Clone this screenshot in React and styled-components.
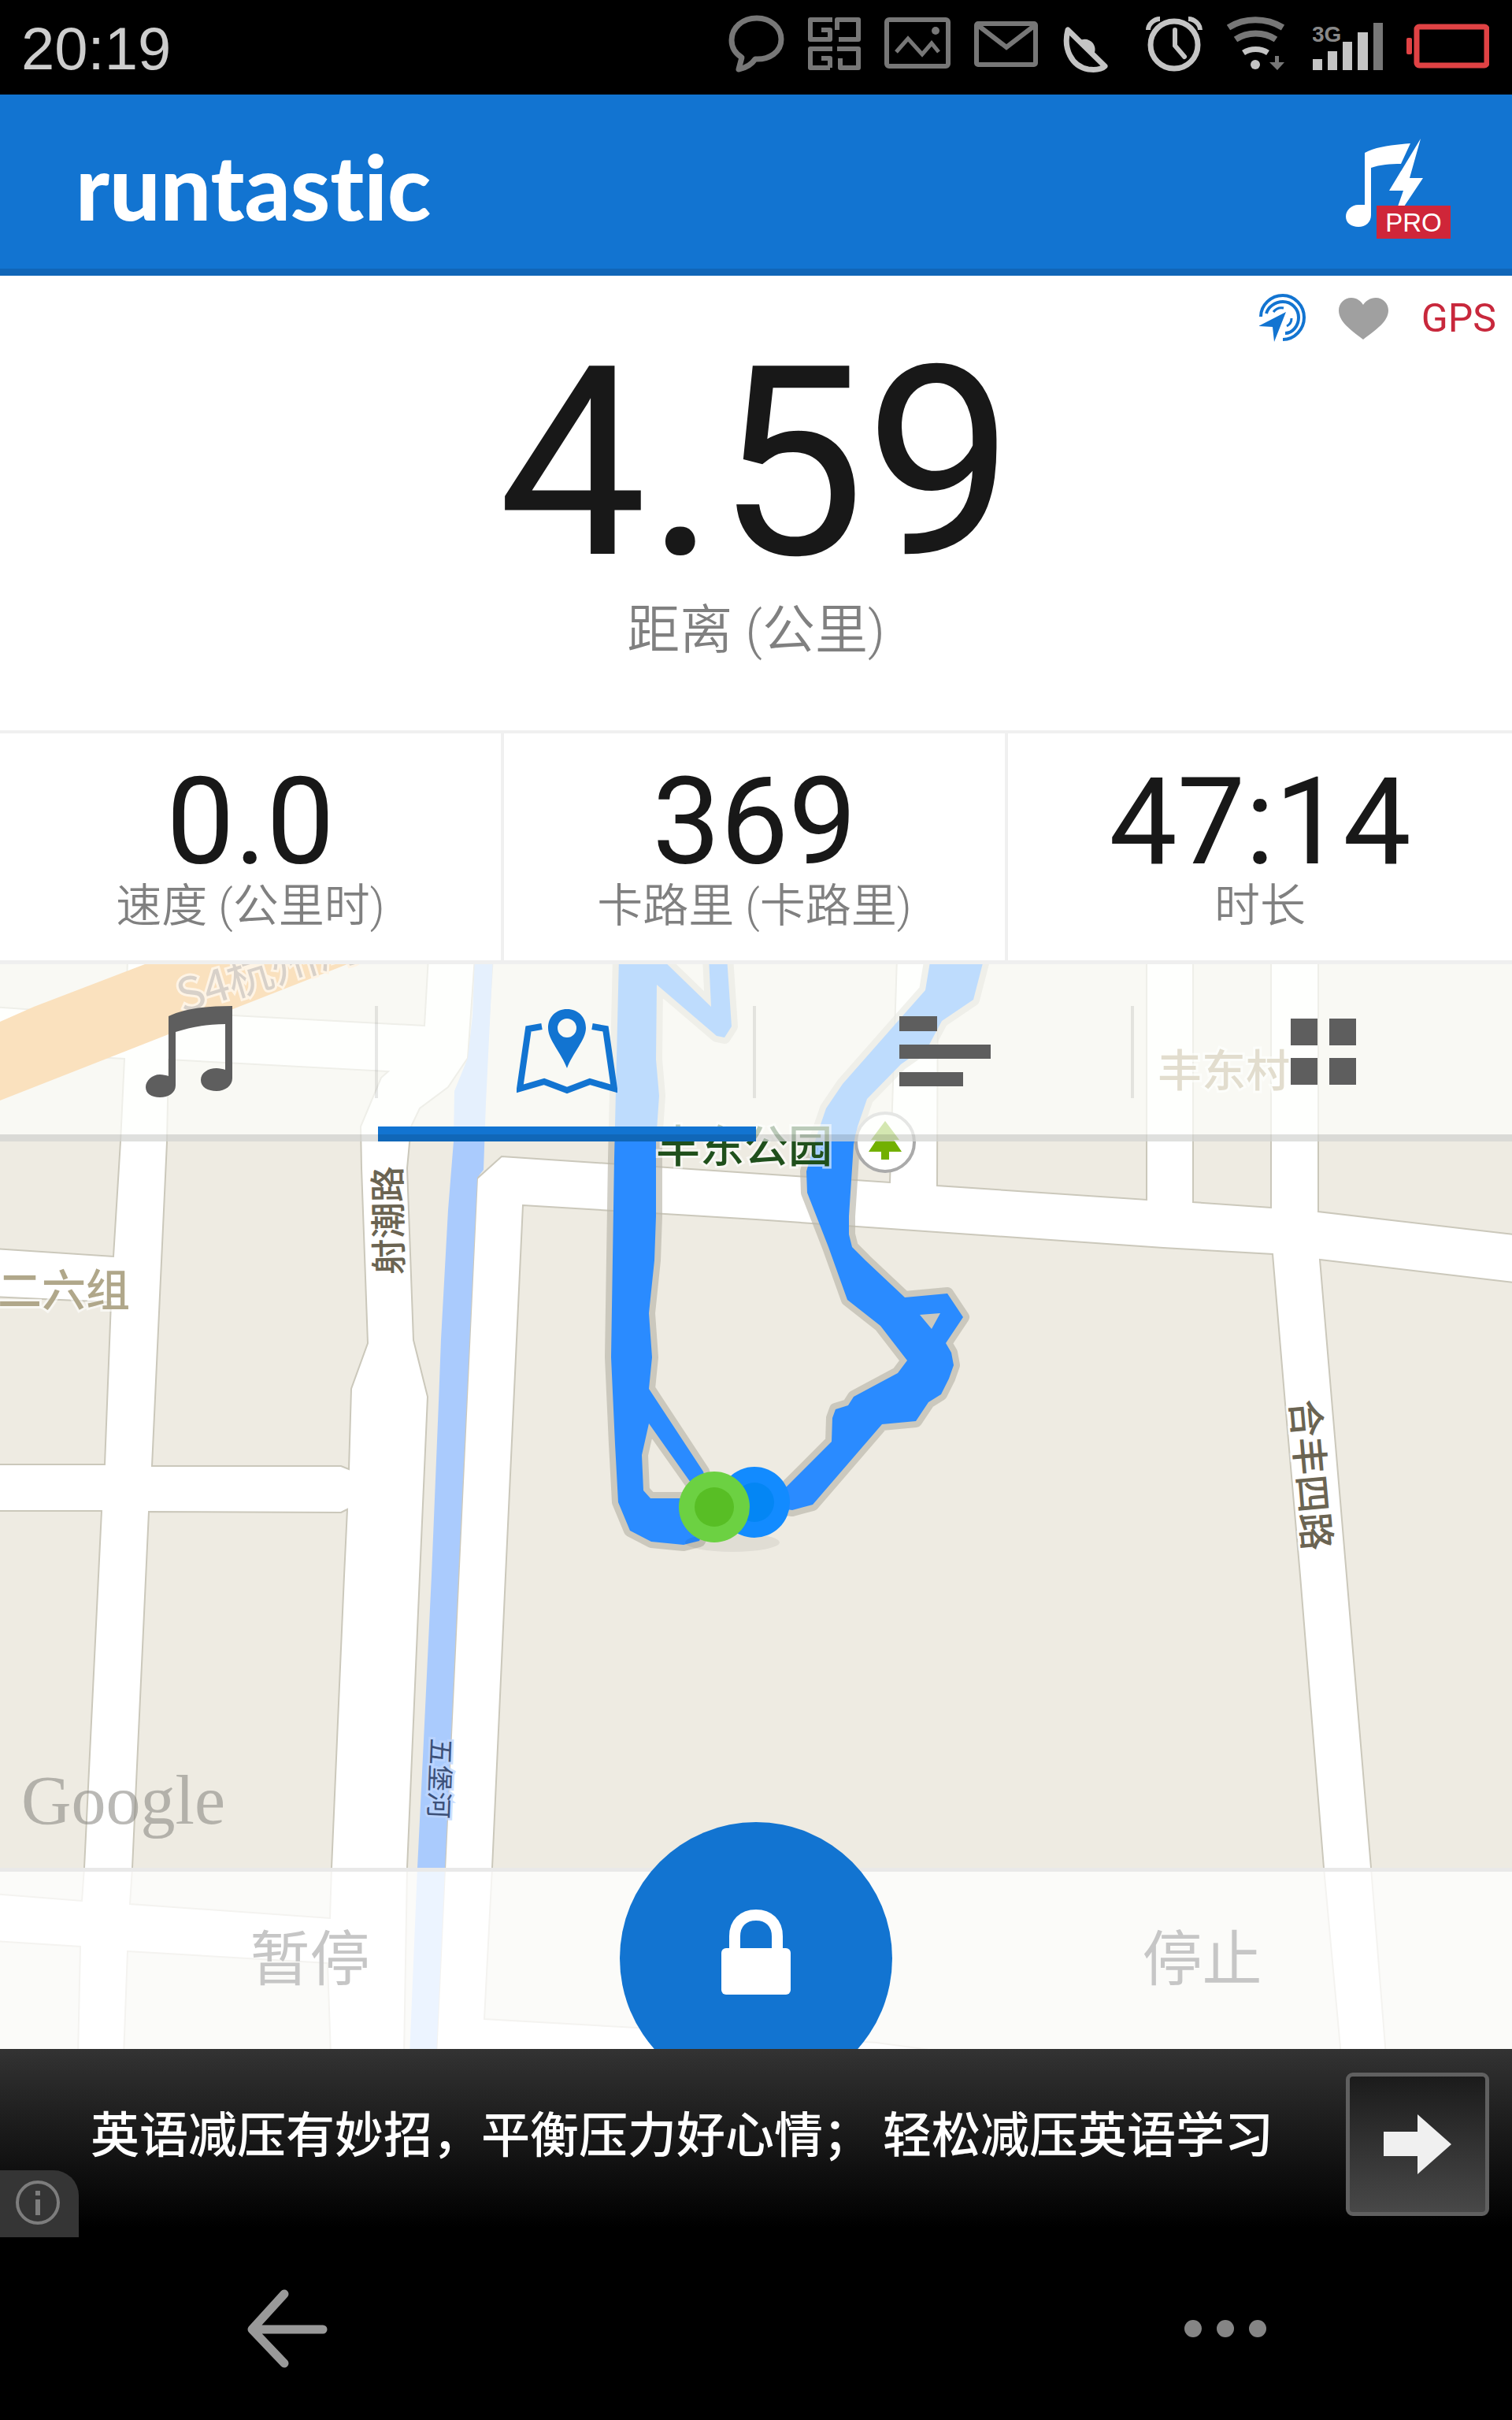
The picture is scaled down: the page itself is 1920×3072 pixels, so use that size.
import React from "react";
import styled, { createGlobalStyle, css } from "styled-components";

const blue = "#1274d1";
const latin = `Roboto, "Noto Sans CJK SC", sans-serif`;
const han = `"Noto Sans CJK SC", sans-serif`;

const GlobalStyle = createGlobalStyle`
  * { box-sizing: border-box; }
  body { margin: 0; background: #000; font-family: ${latin}; }
  button { margin: 0; padding: 0; border: 0; background: none; font: inherit; color: inherit; cursor: pointer; }
  svg { display: block; flex: none; }
`;

const Screen = styled.div`
  display: flex;
  flex-direction: column;
  min-height: 100vh;
  background: #fff;
`;

const StatusBar = styled.div`
  display: flex;
  align-items: flex-start;
  justify-content: space-between;
  height: 120px;
  padding: 16px 29px 0 27px;
  background: #000;
`;

const Clock = styled.time`
  font: 76px/92px "Liberation Sans", sans-serif;
  color: #cdcdcd;
`;

const StatusIcons = styled.div`
  display: flex;
  gap: 30px;
`;

const Header = styled.header`
  display: flex;
  align-items: center;
  justify-content: space-between;
  height: 230px;
  padding: 20px 78px 0 96px;
  border-bottom: 9px solid #1066b8;
  background: ${blue};
`;

const Brand = styled.h1`
  margin: 0;
  padding-bottom: 10px;
  font: 900 114px/128px Lato, sans-serif;
  font-variant-ligatures: none;
  color: #fff;
`;

const Hero = styled.section`
  display: flex;
  flex-direction: column;
  align-items: center;
  padding-bottom: 87px;
  border-bottom: 4px solid #f0f0f0;
`;

const Sensors = styled.div`
  display: flex;
  align-self: stretch;
  align-items: center;
  justify-content: flex-end;
  gap: 42px;
  height: 94px;
  padding: 14px 20px 0 0;
`;

const Gps = styled.span`
  font-size: 50px;
  line-height: 60px;
  color: #c8283c;
`;

const Value = styled.div`
  font-size: ${(p) => (p.$large ? 336 : 154)}px;
  line-height: ${(p) => (p.$large ? 288 : 132)}px;
  color: #181818;
`;

const Label = styled.div`
  margin-top: ${(p) => (p.$large ? 28 : 8)}px;
  font-size: ${(p) => (p.$large ? 67 : 58)}px;
  line-height: ${(p) => (p.$large ? 80 : 64)}px;
  font-weight: 350;
  color: #808080;
`;

const Stats = styled.section`
  display: grid;
  grid-template-columns: repeat(3, 1fr);
  border-bottom: 5px solid #efefef;
`;

const Stat = styled.div`
  display: flex;
  flex-direction: column;
  align-items: center;
  padding: 47px 0 37px;
  &:not(:last-child) { border-right: 4px solid #f0f0f0; }
`;

const Stage = styled.main`
  display: grid;
  flex: 1;
  grid-template-rows: minmax(0, 1fr);
  overflow: hidden;
  min-height: 900px;
`;

const MapLayer = styled.div`
  grid-area: 1 / 1;
  min-height: 0;
  overflow: hidden;
  svg { width: 100%; height: 100%; }
`;

const Tabs = styled.nav`
  grid-area: 1 / 1;
  align-self: start;
  display: grid;
  grid-template-columns: repeat(4, 1fr);
  z-index: 1;
  background: rgba(254, 255, 252, 0.7);
`;

const Tab = styled.button`
  display: flex;
  align-items: center;
  justify-content: center;
  height: 225px;
  padding-bottom: 4px;
  color: ${(p) => (p.$active ? blue : "#5e5e5e")};
  box-shadow: inset 0 -9px rgba(0, 0, 0, 0.12);
  &:not(:last-child) {
    background: linear-gradient(rgba(0, 0, 0, 0.09), rgba(0, 0, 0, 0.09)) right 53px / 4px 117px no-repeat;
  }
  ${(p) => p.$active && css`box-shadow: inset 0 -9px #1067b8, inset 0 -19px ${blue};`}
`;

const Controls = styled.div`
  grid-area: 1 / 1;
  align-self: end;
  display: grid;
  grid-template-columns: 1fr 346px 1fr;
  grid-template-rows: minmax(0, 1fr);
  z-index: 1;
  height: 230px;
  border-top: 5px solid #e9e9e9;
  background: rgba(255, 255, 255, 0.78);
`;

const Action = styled.button`
  padding-bottom: 16px;
  font: 76px/88px ${han};
  color: #c6c6c6;
`;

const LockButton = styled.button`
  display: flex;
  align-items: center;
  justify-content: center;
  width: 346px;
  height: 346px;
  margin-top: -63px;
  padding-bottom: 15px;
  border-radius: 50%;
  background: ${blue};
`;

const Ad = styled.aside`
  position: relative;
  display: flex;
  align-items: flex-start;
  justify-content: space-between;
  height: 239px;
  padding: 30px 29px 0 115px;
  background: linear-gradient(#333, #1c1c1c 40%, #000 95%);
`;

const AdLink = styled.a`
  padding-top: 35px;
  font: 500 62px/80px ${han};
  color: #fff;
  text-decoration: none;
  white-space: nowrap;
`;

const AdButton = styled.button`
  display: flex;
  align-items: center;
  justify-content: center;
  flex: none;
  width: 182px;
  height: 182px;
  border: 5px solid #606060;
  border-radius: 9px;
  background: linear-gradient(#1b1b1b, #484848);
`;

const AdInfo = styled.button`
  position: absolute;
  left: 0;
  bottom: 0;
  display: flex;
  align-items: center;
  justify-content: center;
  width: 100px;
  height: 85px;
  border-radius: 0 32px 0 0;
  background: #353535;
`;

const NavBar = styled.nav`
  display: flex;
  align-items: center;
  justify-content: space-between;
  height: 232px;
  padding: 0 312px 0 314px;
  background: #000;
`;

const gray = { stroke: "#777", strokeWidth: 7, fill: "none" };
const light = { stroke: "#c4c4c4", strokeWidth: 7, fill: "none" };

function StatusGlyphs() {
  return (
    <StatusIcons>
      <svg width="71" height="80" viewBox="925 16 71 80" {...gray} strokeLinejoin="round">
        <path d="M961 23c-18 0-32 12-32 28 0 9 5 17 13 22l-4 15c10-2 17-7 21-13 18 1 33-9 33-25 0-15-13-27-31-27Z" />
      </svg>
      <svg width="67" height="80" viewBox="1025 16 67 80" {...gray} strokeWidth="6" strokeLinejoin="round">
        <path d="M1056 25H1028V50H1053V38H1042M1062 38V25H1089V50H1064M1056 62H1028V86H1053M1053 86V74H1042M1062 62H1089V86H1066V74" />
      </svg>
      <svg width="84" height="80" viewBox="1121 16 84 80" {...gray} strokeWidth="6">
        <rect x="1124" y="25" width="78" height="59" rx="3" />
        <path d="m1136 66 15-17 18 20 12-14 9 11" strokeWidth="5" />
        <circle cx="1186" cy="39" r="5" fill="#777" stroke="none" />
      </svg>
      <svg width="81" height="80" viewBox="1236 16 81 80" {...gray} strokeWidth="6">
        <rect x="1239" y="30" width="75" height="52" rx="2" />
        <path d="m1242 33 35 27 35-27" />
      </svg>
      <svg width="76" height="80" viewBox="1347 16 76 80" {...light} strokeWidth="7" strokeLinejoin="round">
        <path d="M1355 38c-6 23 4 46 26 50 9 1 17 0 21-4Z" />
        <path d="m1370 52c5-4 13-2 17 3 4 6 3 12-1 17Z" fill="#c4c4c4" stroke="none" />
      </svg>
      <svg width="74" height="80" viewBox="1453 16 74 80" {...light}>
        <circle cx="1490" cy="57" r="30" />
        <path d="M1491 38v20l12 14" strokeWidth="6" strokeLinecap="round" />
        <path d="M1457 38c0-7 7-14 15-14M1523 38c0-7-7-14-15-14" strokeWidth="6" />
      </svg>
      <svg width="79" height="80" viewBox="1559 16 79 80" {...light}>
        <path d="M1561 35c20-13 48-13 69 0M1570 50c15-10 36-10 51 0" stroke="#777" strokeWidth="8" />
        <path d="M1580 67c9-6 22-6 31 0" strokeWidth="7" />
        <circle cx="1595" cy="82" r="6" fill="#c4c4c4" stroke="none" />
        <path d="M1620 71h5v8h7l-9 10-10-10h7Z" fill="#777" stroke="none" />
      </svg>
      <svg width="89" height="80" viewBox="1668 16 89 80" fill="#c4c4c4">
        <text x="1667" y="53" fontFamily="Liberation Sans, sans-serif" fontWeight="700" fontSize="28" fill="#888">3G</text>
        <path d="M1668 75h12v14h-12ZM1687 65h12v24h-12ZM1706 53h12v36h-12ZM1725 41h13v48h-13Z" />
        <rect x="1745" y="29" width="12" height="60" fill="#777" />
      </svg>
      <svg width="105" height="80" viewBox="1786 16 105 80">
        <rect x="1799" y="34" width="89" height="49" rx="3" fill="none" stroke="#e04244" strokeWidth="7" />
        <rect x="1786" y="48" width="7" height="21" rx="2" fill="#e04244" />
      </svg>
    </StatusIcons>
  );
}

const BLOCKS = [
  "-9,1215 162,1215 160,1290 -9,1278",
  "222,1215 544,1215 539,1302 222,1285",
  "-9,1335 158,1344 153,1449 144,1595 -9,1585",
  "214,1345 493,1360 484,1368 458,1430 459,1483 467,1705 446,1763 443,1865 433,1861 193,1861 212,1450",
  "-9,1646 141,1653 133,1859 -9,1859",
  "-9,1918 129,1918 107,2371 104,2413 -9,2404",
  "189,1919 433,1920 441,1916 437,2000 421,2371 419,2435 165,2417 168,2371",
  "-9,2464 102,2471 99,2610 -9,2610",
  "162,2477 416,2492 420,2610 157,2610",
  "603,1215 594,1343 569,1380 533,1407 522,1430 517,1483 525,1701 543,1773 533,2000 517,2371 513,2610 554,2610 606,1495 626,1215",
  "626,1215 1139,1215 1130,1501 637,1468 607,1495",
  "664,1530 960,1548 1477,1584 1616,1592 1632,1782 1651,2000 1681,2371 1703,2610 1240,2610 1113,2593 808,2574 615,2563 625,2371 642,2000",
  "1191,1215 1456,1215 1456,1523 1190,1505",
  "1515,1215 1614,1215 1614,1533 1515,1526",
  "1674,1215 1930,1215 1930,1568 1674,1538",
  "1676,1599 1930,1629 1930,2610 1760,2610 1741,2371 1710,2000 1693,1800",
];

const TRACK =
  "M786 1215H838L903 1278 900 1215H923L929 1303 920 1317 910 1315 834 1250 833 1345 837 1391 833 1449 833 1544 831 1600 824 1667 828 1723 824 1763 893 1868 907 1913 888 1956 868 1961 827 1957 800 1943 785 1907 781 1833 776 1723 780 1470Z" +
  "M824 1807 815 1847 817 1892 826 1902H890L877 1882Z" +
  "M1182 1215 1175 1257 1144 1292 1070 1376 1049 1407 1036 1445 1024 1487 1025 1514 1052 1583 1076 1650 1118 1683 1152 1727 1140 1743 1084 1773 1077 1784 1061 1789 1057 1800 1056 1830 999 1887 960 1910 1006 1917 1032 1910 1120 1808 1163 1804 1179 1780 1195 1770 1205 1750 1211 1733 1208 1717 1201 1705 1223 1672 1203 1642 1149 1647 1099 1600 1082 1583 1078 1567 1078 1544 1084 1453 1089 1430 1101 1395 1144 1351 1180 1326 1196 1296 1236 1269 1250 1215Z" +
  "M1168 1669 1194 1667 1183 1687Z";

const MapText = styled.text`
  font-family: ${han};
  font-size: ${(p) => p.$size || 56}px;
  font-weight: ${(p) => p.$weight || 500};
  fill: ${(p) => p.$color};
  stroke: ${(p) => p.$halo || "rgba(255,255,255,0.6)"};
  stroke-width: 6px;
  paint-order: stroke;
`;

const Watermark = styled.text`
  font-family: "Liberation Serif", serif;
  font-size: 88px;
  fill: #8c8b86;
  fill-opacity: 0.6;
`;

function RouteMap() {
  return (
    <MapLayer>
      <svg viewBox="0 1224 1920 1377" preserveAspectRatio="xMidYMid slice" role="img" aria-label="路线地图">
        <rect y="1224" width="1920" height="1377" fill="#fff" />
        <g fill="#eeebe2" stroke="#cbc8bb" strokeWidth="2">
          {BLOCKS.map((b) => <polygon key={b} points={b} />)}
        </g>
        <polygon
          fill="#aacbfd"
          points="603,1215 600,1290 594,1343 577,1385 576,1449 569,1536 560,1700 557,1780 548,2000 537,2230 530,2371 520,2610 554,2610 565,2371 582,2000 606,1495 614,1485 617,1400 626,1215"
        />
        <path d="M0 1297 43 1278 184 1224H441L0 1397Z" fill="#f2992c" />
        <MapText x="232" y="1286" transform="rotate(-17 232 1286)" $size={58} $weight={400} $color="#806652" $halo="#ffd9b0">S4杭州湾高速</MapText>
        <path d={TRACK} fill="none" stroke="#b9b5a9" strokeOpacity="0.65" strokeWidth="16" strokeLinejoin="round" />
        <path d={TRACK} fill="#2a8bff" fillRule="evenodd" />
        <MapText x="833" y="1475" $color="#20501c">丰东公园</MapText>
        <circle cx="1124" cy="1450" r="37" fill="#fff" stroke="#aaa" strokeWidth="4" />
        <path d="m1124 1423 18 24h-7l10 15h-16v10h-10v-10h-16l10-15h-7Z" fill="#72b000" />
        <MapText x="1470" y="1379" $color="#a28e62">丰东村</MapText>
        <MapText x="-3" y="1658" $color="#b0a78a">二六组</MapText>
        <MapText $size={46} $color="#6b6452" x="0" y="0" transform="translate(511 1618) rotate(-91)">射潮路</MapText>
        <MapText $size={48} $color="#6b6452" x="0" y="0" transform="translate(1639 1778) rotate(85)">合丰四路</MapText>
        <MapText $size={34} $weight={400} $color="#3c5078" $halo="rgba(190,214,255,0.8)" x="0" y="0" transform="translate(548 2206) rotate(92)">五堡河</MapText>
        <ellipse cx="930" cy="1958" rx="60" ry="12" fill="#000" fillOpacity="0.06" />
        <circle cx="958" cy="1907" r="45" fill="#128bff" />
        <circle cx="958" cy="1907" r="25" fill="#0486f4" />
        <circle cx="907" cy="1913" r="45" fill="#6cd142" />
        <circle cx="907" cy="1913" r="25" fill="#58be25" />
        <Watermark x="27" y="2315">Google</Watermark>
      </svg>
    </MapLayer>
  );
}

const STATS = [
  { value: "0.0", label: "速度 (公里时)" },
  { value: "369", label: "卡路里 (卡路里)" },
  { value: "47:14", label: "时长" },
];

export default function App() {
  return (
    <>
      <GlobalStyle />
      <Screen>
        <StatusBar>
          <Clock>20:19</Clock>
          <StatusGlyphs />
        </StatusBar>
        <Header>
          <Brand>runtastic</Brand>
          <button aria-label="音乐 PRO">
            <svg width="134" height="130" viewBox="1708 177 134 130">
              <path d="M1733 195c14-8 36-10 58-12l-12 26c-13 0-27 1-38 5v60c0 9-7 15-16 15s-16-5-16-13 7-15 16-15h8Z" fill="#fff" />
              <path d="m1804 177-14 50h17l-24 36h-8l7-20h-18Z" fill="#fff" />
              <rect x="1748" y="262" width="94" height="42" fill="#cf2639" />
              <text x="1795" y="295" textAnchor="middle" fontFamily="Liberation Sans, sans-serif" fontSize="33" fill="#fff">PRO</text>
            </svg>
          </button>
        </Header>
        <Hero>
          <Sensors>
            <svg width="59" height="62" viewBox="1598 373 59 62" fill="none" stroke={blue} strokeWidth="4">
              <path d="M1600 402c0-15 13-27 28-27s27 13 27 28-12 28-27 28" />
              <path d="M1607 398c2-8 11-15 21-15 11 0 20 9 20 20s-8 20-17 20" />
              <path d="M1616 396c3-4 8-6 13-5M1639 404c0 4-2 8-6 10" strokeWidth="3" />
              <path d="m1632 396-35 18 18 1 2 19Z" fill={blue} stroke="none" />
            </svg>
            <svg width="63" height="53" viewBox="0 0 63 53" fill="#a0a0a0">
              <path d="M31 53C14 40 0 30 0 16 0 7 7 0 16 0c7 0 12 4 15 9 3-5 9-9 16-9 9 0 16 7 16 16 0 14-15 24-32 37Z" />
            </svg>
            <Gps>GPS</Gps>
          </Sensors>
          <Value $large>4.59</Value>
          <Label $large>距离 (公里)</Label>
        </Hero>
        <Stats>
          {STATS.map((s) => (
            <Stat key={s.label}>
              <Value>{s.value}</Value>
              <Label>{s.label}</Label>
            </Stat>
          ))}
        </Stats>
        <Stage>
          <RouteMap />
          <Tabs>
            <Tab aria-label="音乐">
              <svg width="110" height="116" viewBox="185 1277 110 116" fill="currentColor">
                <path d="M214 1290c22-10 50-13 81-13v92c0 9-9 16-20 16s-20-5-20-14 9-15 20-15c4 0 8 1 11 2v-58c-24 0-44 4-63 10v68c0 9-9 15-20 15s-18-5-18-13 8-16 18-16c4 0 8 1 11 2Z" />
              </svg>
            </Tab>
            <Tab $active aria-label="地图">
              <svg width="128" height="108" viewBox="656 1281 128 108">
                <path d="M688 1303l-17 3-11 76 31-9 29 11 29-11 31 9-11-76-17-3" fill="none" stroke="currentColor" strokeWidth="8" />
                <path fillRule="evenodd" d="M720 1281c-14 0-24 10-24 24 0 15 17 32 24 51 7-19 24-36 24-51 0-14-10-24-24-24Zm0 12a12 12 0 1 1 0 24 12 12 0 0 1 0-24Z" fill="currentColor" />
              </svg>
            </Tab>
            <Tab aria-label="分段">
              <svg width="116" height="90" viewBox="0 0 116 90" fill="currentColor">
                <path d="M0 0h48v19H0ZM0 36h116v18H0ZM0 71h81v18H0Z" />
              </svg>
            </Tab>
            <Tab aria-label="更多">
              <svg width="83" height="84" viewBox="0 0 83 84" fill="currentColor">
                <path d="M0 0h34v34H0ZM49 0h34v34H49ZM0 50h34v34H0ZM49 50h34v34H49Z" />
              </svg>
            </Tab>
          </Tabs>
          <Controls>
            <Action>暂停</Action>
            <LockButton aria-label="锁定">
              <svg width="88" height="109" viewBox="0 0 88 109">
                <path d="M17 52V34C17 17 28 7 44 7s27 10 27 27v18" fill="none" stroke="#fff" strokeWidth="14" />
                <rect y="49" width="88" height="59" rx="6" fill="#fff" />
              </svg>
            </LockButton>
            <Action>停止</Action>
          </Controls>
        </Stage>
        <Ad>
          <AdLink href="#ad">英语减压有妙招，平衡压力好心情； 轻松减压英语学习</AdLink>
          <AdButton aria-label="打开">
            <svg width="86" height="76" viewBox="0 0 86 76" fill="#f0f0f0">
              <path d="M0 22h43V0l43 38-43 38V53H0Z" />
            </svg>
          </AdButton>
          <AdInfo aria-label="广告信息">
            <svg width="60" height="60" viewBox="0 0 60 60" fill="none" stroke="#7d7d7d" strokeWidth="4">
              <circle cx="28" cy="28" r="26" />
              <path d="M28 24v20M28 13v6" strokeWidth="6" />
            </svg>
          </AdInfo>
        </Ad>
        <NavBar>
          <button aria-label="返回">
            <svg width="102" height="100" viewBox="0 0 102 100" fill="none" stroke="#999" strokeWidth="11" strokeLinecap="round" strokeLinejoin="round">
              <path d="M47 6 6 51l41 43M8 51h88" />
            </svg>
          </button>
          <button aria-label="更多选项">
            <svg width="104" height="22" viewBox="0 0 104 22" fill="#858585">
              <circle cx="11" cy="11" r="11" />
              <circle cx="52" cy="11" r="11" />
              <circle cx="93" cy="11" r="11" />
            </svg>
          </button>
        </NavBar>
      </Screen>
    </>
  );
}
